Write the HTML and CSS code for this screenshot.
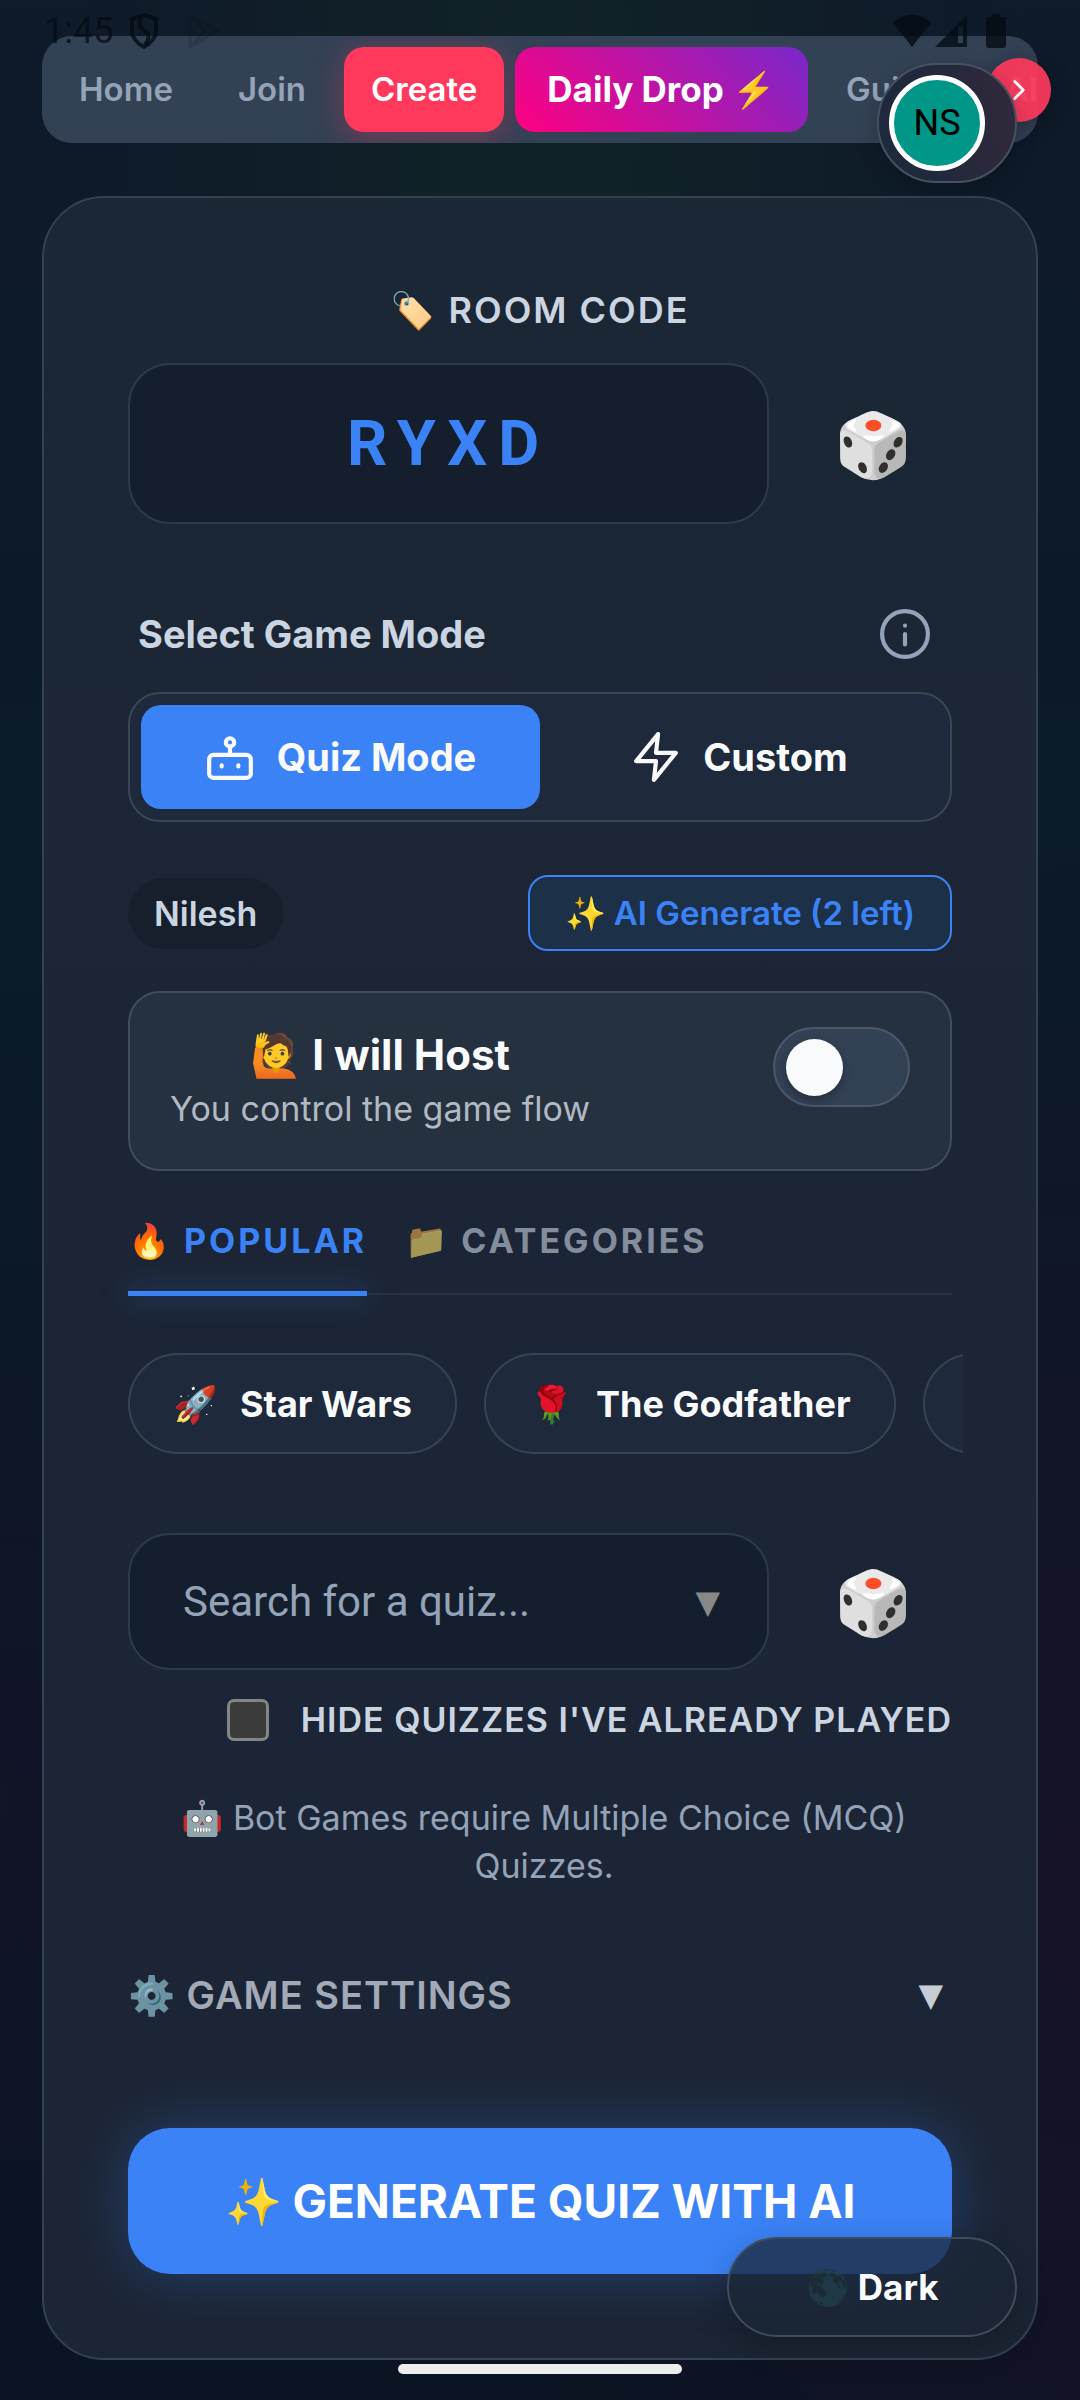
FILE: index.html
```
<!DOCTYPE html>
<html lang="en">
  <head>
    <meta charset="utf-8">
    <meta name="viewport" content="width=device-width, initial-scale=1">
    <title>Create Room</title>
    <link rel="stylesheet" href="styles.css">
  </head>
  <body>
    <div class="status">
      <span class="time">1:45</span>
      <svg class="shield" viewBox="0 0 30 36" fill="none" stroke="currentColor" stroke-width="4">
        <path d="M15 2 L27 6 V17 C27 25 21 31 15 34 C9 31 3 25 3 17 V6 Z"/>
        <path d="M12 4 C8 14 13 16 17 19 C21 22 20 27 16 32"/>
      </svg>
      <svg class="play" viewBox="0 0 34 36" fill="none" stroke="currentColor" stroke-width="3">
        <path d="M3 3 L31 17 L3 34 Z M3 3 L18 18 L3 34"/>
      </svg>
      <span class="spacer"></span>
      <svg class="wifi" viewBox="0 0 40 34" fill="currentColor">
        <path d="M20 33 L1 9 C12 -2 28 -2 39 9 Z"/>
      </svg>
      <svg class="signal" viewBox="0 0 34 34" fill="currentColor">
        <path fill-rule="evenodd" d="M33 1 V33 H1 Z M24 12 V29 H29 V12 Z"/>
      </svg>
      <svg class="battery" viewBox="0 0 20 34" fill="currentColor">
        <path d="M6 0 H14 V3 H17 Q20 3 20 6 V31 Q20 34 17 34 H3 Q0 34 0 31 V6 Q0 3 3 3 H6 Z"/>
      </svg>
    </div>

    <nav class="nav">
      <a class="nav-item" href="#home">Home</a>
      <a class="nav-item" href="#join">Join</a>
      <a class="nav-item active" href="#create">Create</a>
      <a class="nav-item drop" href="#daily">Daily Drop ⚡</a>
      <a class="nav-item" href="#guide">Guide</a>
      <a class="nav-item" href="#ai">AI</a>
    </nav>
    <button class="nav-next" aria-label="Scroll menu">
      <svg viewBox="0 0 24 24" fill="none" stroke="currentColor" stroke-width="2" stroke-linecap="round" stroke-linejoin="round"><path d="M9 18l6-6-6-6"/></svg>
    </button>
    <button class="account"><span class="avatar">NS</span></button>

    <main class="card">
      <label class="room-label" for="room">🏷️ ROOM CODE</label>
      <div class="row">
        <input class="box code" id="room" type="text" value="RYXD">
        <button class="dice" aria-label="Random code">🎲</button>
      </div>

      <div class="mode-head">
        <h2>Select Game Mode</h2>
        <button class="info" aria-label="About game modes">
          <svg viewBox="0 0 24 24" fill="none" stroke="currentColor" stroke-width="2" stroke-linecap="round"><circle cx="12" cy="12" r="11"/><path d="M12 12v5M12 8v0"/></svg>
        </button>
      </div>
      <div class="modes">
        <button class="mode selected">
          <svg viewBox="0 0 24 24" fill="none" stroke="currentColor" stroke-width="2" stroke-linecap="round" stroke-linejoin="round"><rect x="2" y="11" width="20" height="11" rx="2"/><circle cx="12" cy="5" r="2"/><path d="M12 7v4M8 16v.5M16 16v.5"/></svg>
          Quiz Mode
        </button>
        <button class="mode">
          <svg viewBox="0 0 24 24" fill="none" stroke="currentColor" stroke-width="2" stroke-linecap="round" stroke-linejoin="round"><path d="M13 1L2.500 14H12l-1 9L21.500 10H12z"/></svg>
          Custom
        </button>
      </div>

      <div class="player">
        <span class="name">Nilesh</span>
        <button class="generate-small">✨ AI Generate (2 left)</button>
      </div>

      <div class="host">
        <label class="host-text" for="host">
          <span class="host-title">🙋 I will Host</span>
          <span class="host-sub">You control the game flow</span>
        </label>
        <input class="switch" id="host" type="checkbox">
      </div>

      <div class="tabs">
        <button class="tab current">🔥 POPULAR</button>
        <button class="tab">📁 CATEGORIES</button>
      </div>
      <div class="chips">
        <button class="chip"><span>🚀</span>Star Wars</button>
        <button class="chip"><span>🌹</span>The Godfather</button>
        <button class="chip" aria-label="More quizzes"></button>
      </div>

      <div class="row search-row">
        <div class="search">
          <input class="box" type="text" placeholder="Search for a quiz..." aria-label="Search for a quiz">
          <span class="arrow">▼</span>
        </div>
        <button class="dice" aria-label="Random quiz">🎲</button>
      </div>
      <label class="hide" for="played">
        <input id="played" type="checkbox">
        HIDE QUIZZES I'VE ALREADY PLAYED
      </label>
      <p class="note">🤖 Bot Games require Multiple Choice (MCQ) Quizzes.</p>

      <button class="settings">
        <span>⚙️ GAME SETTINGS</span>
        <span class="settings-arrow">▼</span>
      </button>
      <button class="generate">✨ GENERATE QUIZ WITH AI</button>
    </main>

    <button class="theme"><span>🌑</span> Dark</button>
    <div class="home-bar"></div>
  </body>
</html>
```
FILE: styles.css
```
* {
  box-sizing: border-box;
}
body {
  margin: 0;
  padding: 36px 42px 40px;
  font-family: Inter, sans-serif;
  color: #f8fafc;
  background:
    radial-gradient(ellipse at 50% 5%, rgba(18, 38, 38, 0.7), transparent 60%),
    radial-gradient(ellipse at 100% 80%, rgba(26, 18, 40, 0.7), transparent 40%),
    radial-gradient(ellipse at 0% 75%, rgba(22, 18, 40, 0.5), transparent 20%),
    linear-gradient(#0f1a2a, #0b1b27 40%, #0d1527 70%, #0b1422);
}
button {
  margin: 0;
  padding: 0;
  border: none;
  background: none;
  color: inherit;
  font: inherit;
}
a {
  color: inherit;
  text-decoration: none;
}
svg {
  display: block;
}

/* phone status bar, over the page */
.status {
  position: absolute;
  top: 12px;
  left: 44px;
  right: 74px;
  z-index: 5;
  display: flex;
  align-items: center;
  height: 38px;
  color: rgba(4, 12, 20, 0.8);
  font: 36px/38px Roboto, sans-serif;
}
.shield {
  width: 30px;
  height: 36px;
  margin-left: 16px;
}
.play {
  width: 34px;
  height: 36px;
  margin-left: 28px;
  opacity: 0.2;
}
.spacer {
  flex: 1;
}
.wifi {
  width: 40px;
  height: 34px;
}
.signal {
  width: 34px;
  height: 34px;
  margin: 0 18px 0 2px;
}
.battery {
  width: 20px;
  height: 34px;
}

.nav {
  display: flex;
  gap: 11px;
  height: 107px;
  padding: 11px 10px;
  border-radius: 30px;
  background: #334155;
  overflow: hidden;
}
.nav-item {
  flex: none;
  padding: 0 27px;
  border-radius: 20px;
  color: #94a3b8;
  font-size: 33px;
  font-weight: 600;
  line-height: 85px;
}
.nav-item.active {
  background: #ff385c;
  color: #fff;
  box-shadow: 0 6px 30px rgba(255, 56, 92, 0.35);
}
.nav-item.drop {
  padding: 0 32px;
  background: linear-gradient(45deg, #ff0080, #7928ca);
  color: #fff;
  font-size: 35px;
  font-weight: 700;
}
.nav-next {
  position: absolute;
  top: 58px;
  right: 29px;
  display: flex;
  align-items: center;
  justify-content: center;
  width: 64px;
  height: 64px;
  border-radius: 50%;
  background: rgba(255, 56, 92, 0.92);
  box-shadow: 0 4px 22px rgba(0, 0, 0, 0.3);
}
.nav-next svg {
  width: 34px;
  height: 34px;
}
.account {
  position: absolute;
  top: 63px;
  right: 63px;
  display: flex;
  align-items: center;
  width: 140px;
  height: 120px;
  padding: 0 10px;
  border: 2px solid #475060;
  border-radius: 60px;
  background: linear-gradient(80deg, #1e293b 30%, #33283b);
  box-shadow: 0 8px 22px rgba(0, 0, 0, 0.2);
}
.avatar {
  width: 96px;
  height: 96px;
  border: 5px solid #fff;
  border-radius: 50%;
  background: #009688;
  color: #000;
  font: 36px/86px Roboto, sans-serif;
  text-align: center;
}

.card {
  display: flex;
  flex-direction: column;
  margin-top: 53px;
  padding: 85px 84px 84px;
  border: 2px solid #344150;
  border-radius: 62px;
  background: linear-gradient(#1b2735, #1c2535 40%, #1c2535);
}
.room-label {
  margin-bottom: 26px;
  color: #cbd5e1;
  font-size: 36px;
  font-weight: 600;
  line-height: 54px;
  letter-spacing: 2px;
  text-align: center;
}
.row {
  display: flex;
  align-items: center;
  gap: 25px;
}
.box {
  flex: 1;
  min-width: 0;
  width: 100%;
  height: 137px;
  padding: 0 53px;
  border: 2px solid #2d3a49;
  border-radius: 42px;
  background: #141e2d;
  color: #3b82f6;
  font: 42px Roboto, sans-serif;
}
.box::placeholder {
  color: #94a3b8;
}
.code {
  height: 161px;
  font-size: 63px;
  font-weight: 700;
  letter-spacing: 11px;
  text-align: center;
}
.dice {
  width: 158px;
  font-size: 63px;
  line-height: 78px;
}

.mode-head {
  display: flex;
  align-items: center;
  justify-content: space-between;
  margin: 84px 22px 32px 10px;
  color: #cbd5e1;
}
.mode-head h2 {
  margin: 0;
  font-size: 38px;
  font-weight: 700;
  line-height: 52px;
}
.info {
  color: #94a3b8;
}
.info svg {
  width: 50px;
  height: 50px;
}
.modes {
  display: grid;
  grid-template-columns: 1fr 1fr;
  height: 130px;
  padding: 11px;
  border: 2px solid #3a4656;
  border-radius: 32px;
  background: #1e293b;
}
.mode {
  display: flex;
  align-items: center;
  justify-content: center;
  gap: 22px;
  border-radius: 20px;
  font-size: 38px;
  font-weight: 700;
}
.mode svg {
  width: 50px;
  height: 50px;
}
.mode.selected {
  background: #3b82f6;
}

.player {
  display: flex;
  align-items: center;
  justify-content: space-between;
  margin: 53px 0 40px;
}
.name {
  padding: 0 26px;
  border-radius: 36px;
  background: #16202d;
  color: #cbd5e1;
  font-size: 34px;
  font-weight: 600;
  line-height: 71px;
}
.generate-small {
  padding: 0 35px;
  border: 2px solid #3b82f6;
  border-radius: 20px;
  background: #1c3047;
  color: #3b82f6;
  font-size: 33px;
  font-weight: 600;
  line-height: 72px;
}

.host {
  display: flex;
  justify-content: space-between;
  align-items: flex-start;
  padding: 34px 40px;
  border: 2px solid #414d5a;
  border-radius: 32px;
  background: #25313f;
}
.host-text {
  display: flex;
  flex-direction: column;
  text-align: center;
}
.host-title {
  font-size: 42px;
  font-weight: 700;
  line-height: 56px;
}
.host-sub {
  color: #b1b9c2;
  font-size: 34px;
  line-height: 52px;
}
.switch {
  appearance: none;
  width: 137px;
  height: 80px;
  margin: 0;
  padding: 10px 11px;
  border: 2px solid #4c586a;
  border-radius: 40px;
  background: #334155;
}
.switch::before {
  content: "";
  display: block;
  width: 57px;
  height: 57px;
  border-radius: 50%;
  background: #f8fafc;
  box-shadow: 0 4px 8px rgba(0, 0, 0, 0.3);
}
.switch:checked::before {
  margin-left: auto;
}

.tabs {
  display: flex;
  gap: 38px;
  margin-top: 43px;
  border-bottom: 2px solid #263240;
}
.tab {
  margin-bottom: -3px;
  color: #c8d3df;
  font-size: 34px;
  font-weight: 700;
  line-height: 54px;
  letter-spacing: 3px;
  opacity: 0.6;
}
.tab::after {
  content: "";
  display: block;
  height: 5px;
  margin-top: 23px;
}
.tab.current {
  color: #3b82f6;
  opacity: 1;
}
.tab.current::after {
  background: #3b82f6;
  box-shadow: 0 0 28px rgba(59, 130, 246, 0.6);
}
.chips {
  display: flex;
  gap: 27px;
  margin: 58px -11px 79px 0;
  overflow: hidden;
}
.chip {
  flex: none;
  display: flex;
  align-items: center;
  gap: 22px;
  min-width: 150px;
  height: 101px;
  padding: 0 43px;
  border: 2px solid #374353;
  border-radius: 51px;
  background: #1e293b;
  font-size: 36px;
  font-weight: 700;
}

.search {
  position: relative;
  display: flex;
  flex: 1;
}
.arrow {
  position: absolute;
  top: 41px;
  right: 49px;
  color: #888;
  font: 32px/56px "DejaVu Sans", sans-serif;
}
.hide {
  display: flex;
  align-items: center;
  justify-content: flex-end;
  gap: 32px;
  margin: 29px 0 53px;
  color: #cbd5e1;
  font-size: 34px;
  font-weight: 600;
  line-height: 42px;
  letter-spacing: 1px;
  white-space: nowrap;
}
.hide input {
  appearance: none;
  width: 42px;
  height: 42px;
  margin: 0;
  border: 3px solid #858585;
  border-radius: 7px;
  background: #3b3b3b;
}
.note {
  margin: 0;
  padding: 0 35px 0 43px;
  color: #94a3b8;
  font-size: 34px;
  line-height: 48px;
  text-align: center;
}
.settings {
  display: flex;
  justify-content: space-between;
  margin: 78px 0 106px;
  color: #c4ccd8;
  font-size: 38px;
  font-weight: 600;
  line-height: 54px;
  letter-spacing: 1px;
}
.settings span:first-child {
  opacity: 0.8;
}
.settings-arrow {
  padding-right: 8px;
  color: #c8cdd5;
  font: 32px/54px "DejaVu Sans", sans-serif;
}
.generate {
  height: 146px;
  border-radius: 42px;
  background: #3b82f6;
  box-shadow: 0 0 56px rgba(59, 130, 246, 0.3);
  color: #fff;
  font-size: 46px;
  font-weight: 700;
}

.theme {
  position: absolute;
  top: 2237px;
  right: 63px;
  width: 290px;
  height: 100px;
  border: 2px solid #3f4c5e;
  border-radius: 50px;
  background: rgba(27, 37, 53, 0.75);
  box-shadow: 0 10px 32px rgba(0, 0, 0, 0.25);
  font-size: 35px;
  font-weight: 700;
}
.theme span {
  opacity: 0.7;
}
.home-bar {
  position: absolute;
  top: 2364px;
  left: 50%;
  width: 284px;
  height: 10px;
  margin-left: -142px;
  border-radius: 5px;
  background: #ededed;
}
```
